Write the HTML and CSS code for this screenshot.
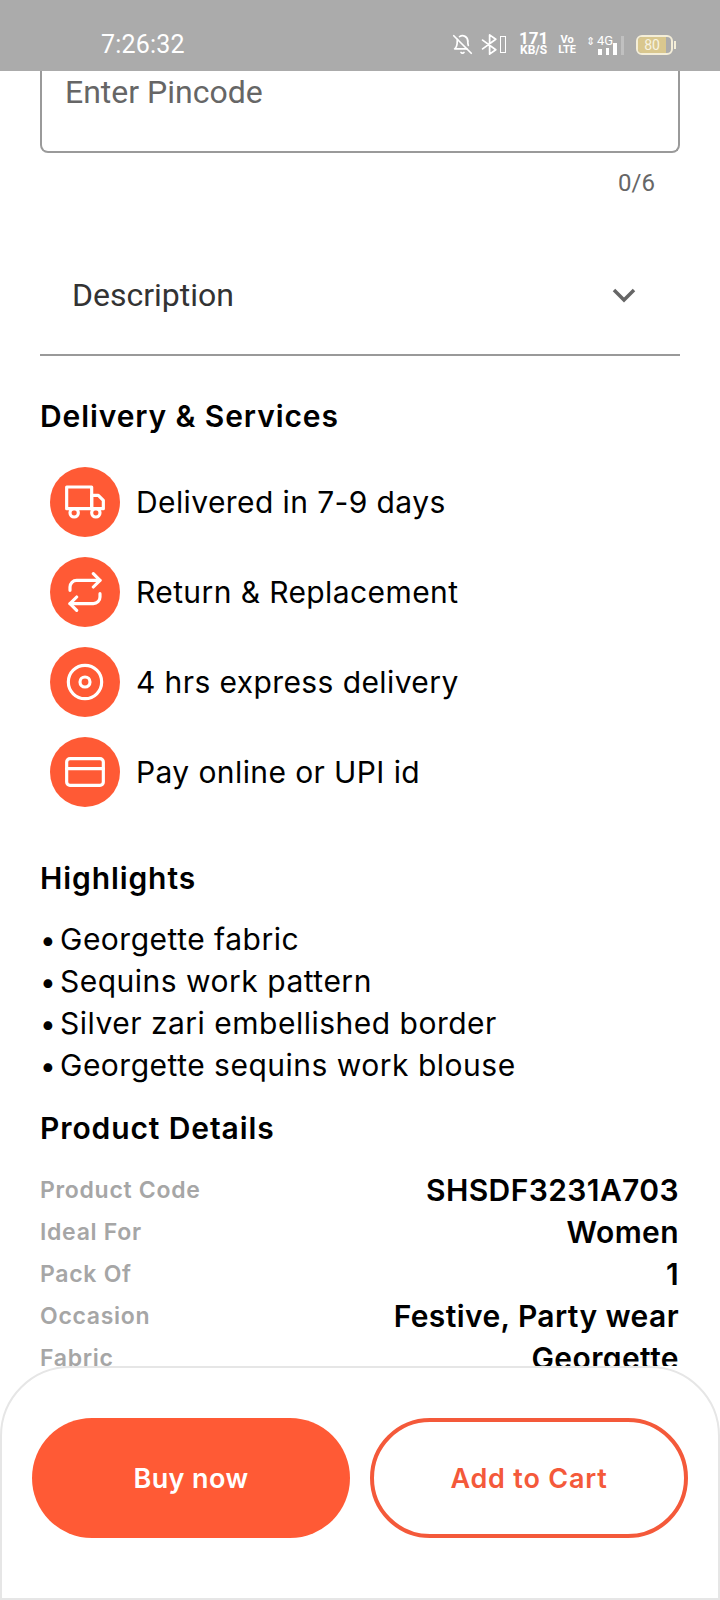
FILE: index.html
```html
<!DOCTYPE html>
<html lang="en">

<head>
    <meta charset="UTF-8">
    <meta name="viewport" content="width=device-width, initial-scale=1.0">
    <title>Product</title>
    <link rel="stylesheet" href="styles.css">
</head>

<body>
    <div class="page">
        <!-- status bar -->
        <div class="status">
            <span class="time">7:26:32</span>
            <div class="status-icons">
                <svg class="bell" viewBox="0 0 24 24"><path d="M13.7 21a2 2 0 0 1-3.4 0"/><path d="M18.6 13A17.900 17.900 0 0 1 18 8"/><path d="M6.300 6.300A5.900 5.900 0 0 0 6 8c0 7-3 9-3 9h14"/><path d="M18 8a6 6 0 0 0-9.300-5"/><path d="M2 2l20 20"/></svg>
                <svg class="bt" viewBox="0 0 24 24"><path d="M3 7l15 11-7 5V1l7 5L3 17"/></svg>
                <span class="mini-batt"></span>
                <span class="speed"><b>171</b><b class="unit">KB/S</b></span>
                <span class="volte"><b>Vo</b><b>LTE</b></span>
                <span class="net">
                    <span class="net-type"><i>⇕</i>4G</span>
                    <span class="bars"><i class="b1"></i><i class="b2"></i><i class="b3"></i><i class="b4"></i></span>
                </span>
                <span class="battery"><span class="battery-level">80</span></span>
                <span class="battery-nub"></span>
            </div>
        </div>

        <div class="main">
            <div class="pincode">Enter Pincode</div>
            <div class="counter">0/6</div>

            <div class="accordion">
                <span>Description</span>
                <svg class="chevron" viewBox="0 0 24 16"><path d="M2 2l10 10L22 2"/></svg>
            </div>

            <h2 class="title services-title">Delivery &amp; Services</h2>
            <ul class="services">
                <li>
                    <span class="circle"><svg viewBox="0 0 24 24"><rect x="1" y="3" width="15" height="13"/><path d="M16 8h4l3 3v5h-7z"/><circle cx="5.500" cy="18.500" r="2.500"/><circle cx="18.500" cy="18.500" r="2.500"/></svg></span>
                    Delivered in 7-9 days
                </li>
                <li>
                    <span class="circle"><svg viewBox="0 0 24 24"><path d="M17 1l4 4-4 4"/><path d="M3 11V9a4 4 0 0 1 4-4h14"/><path d="M7 23l-4-4 4-4"/><path d="M21 13v2a4 4 0 0 1-4 4H3"/></svg></span>
                    Return &amp; Replacement
                </li>
                <li>
                    <span class="circle"><svg viewBox="0 0 24 24"><circle cx="12" cy="12" r="10"/><circle cx="12" cy="12" r="3"/></svg></span>
                    4 hrs express delivery
                </li>
                <li>
                    <span class="circle"><svg viewBox="0 0 24 24"><rect x="1" y="4" width="22" height="16" rx="2"/><path d="M1 10h22"/></svg></span>
                    Pay online or UPI id
                </li>
            </ul>

            <h2 class="title highlights-title">Highlights</h2>
            <ul class="highlights">
                <li><span class="dot">•</span>Georgette fabric</li>
                <li><span class="dot">•</span>Sequins work pattern</li>
                <li><span class="dot">•</span>Silver zari embellished border</li>
                <li><span class="dot">•</span>Georgette sequins work blouse</li>
            </ul>

            <h2 class="title details-title">Product Details</h2>
            <div class="details">
                <div class="row"><span>Product Code</span><b>SHSDF3231A703</b></div>
                <div class="row"><span>Ideal For</span><b>Women</b></div>
                <div class="row"><span>Pack Of</span><b>1</b></div>
                <div class="row"><span>Occasion</span><b>Festive, Party wear</b></div>
                <div class="row"><span>Fabric</span><b>Georgette</b></div>
            </div>
        </div>

        <div class="footer">
            <button class="btn buy">Buy now</button>
            <button class="btn cart">Add to Cart</button>
        </div>
    </div>
</body>

</html>
```

FILE: styles.css
```css
* {
    margin: 0;
    padding: 0;
    box-sizing: border-box;
    list-style: none;
}

body {
    background: #fff;
    font-family: "Inter", "Liberation Sans", sans-serif;
    color: #000;
}

.page {
    width: 720px;
    height: 1600px;
    display: flex;
    flex-direction: column;
    overflow: hidden;
}

/* status bar */
.status {
    height: 71px;
    flex: none;
    background: #ababab;
    display: flex;
    align-items: flex-end;
    padding: 0 0 12px 101px;
    color: #fff;
}

.time {
    font-family: "Roboto", sans-serif;
    font-size: 25px;
    line-height: 28px;
    letter-spacing: 0.2px;
}

.status-icons {
    display: flex;
    align-items: flex-end;
    margin-left: auto;
    margin-bottom: 4px;
    padding-right: 44px;
    font-family: "Roboto", sans-serif;
}

.status-icons svg {
    fill: none;
    stroke: #fff;
    stroke-width: 2;
    stroke-linecap: round;
    stroke-linejoin: round;
}

.bell {
    width: 21px;
    height: 21px;
}

.bt {
    width: 21px;
    height: 21px;
    margin-left: 7px;
}

.mini-batt {
    width: 6px;
    height: 17px;
    border: 1px solid #fff;
    margin-left: -1px;
    margin-bottom: 2px;
}

.speed {
    display: flex;
    flex-direction: column;
    align-items: center;
    margin-left: 13px;
    font-size: 17px;
    line-height: 13px;
}

.speed .unit {
    font-size: 12px;
    line-height: 10px;
}

.volte {
    display: flex;
    flex-direction: column;
    align-items: center;
    margin-left: 10px;
    font-size: 11px;
    line-height: 10px;
}

.net {
    display: flex;
    flex-direction: column;
    margin-left: 10px;
    width: 38px;
}

.net-type {
    font-size: 13px;
    line-height: 12px;
}

.net-type i {
    font-style: normal;
    font-size: 11px;
    margin-right: 2px;
}

.bars {
    display: flex;
    align-items: flex-end;
    gap: 4px;
    height: 19px;
    padding-left: 12px;
    margin-top: -12px;
}

.bars i {
    width: 3.500px;
    background: #fff;
}

.b1 { height: 6px; }
.b2 { height: 7px; }
.b3 { height: 12px; }
.b4 { height: 19px; opacity: 0.25; }

.battery {
    width: 37px;
    height: 20px;
    border: 2px solid #f4eed8;
    border-radius: 6px;
    margin-left: 12px;
    overflow: hidden;
}

.battery-level {
    display: block;
    width: 28px;
    height: 100%;
    background: #d9c78e;
    font-size: 14px;
    line-height: 16px;
    text-align: center;
    color: #f7f3e2;
}

.battery-nub {
    width: 2px;
    height: 8px;
    background: #f4eed8;
    margin: 0 0 6px 1px;
}

/* scrolling content */
.main {
    flex: 1;
    min-height: 0;
    overflow: hidden;
    padding: 0 40px;
}

.pincode {
    height: 82px;
    border: 2px solid #9a9a9a;
    border-top: 0;
    border-radius: 0 0 8px 8px;
    padding: 3px 23px 0;
    font-family: "Roboto", sans-serif;
    font-size: 32px;
    line-height: 36px;
    color: #666;
}

.counter {
    font-family: "Roboto", sans-serif;
    font-size: 24px;
    line-height: 28px;
    color: #666;
    text-align: right;
    padding-right: 25px;
    margin-top: 16px;
}

.accordion {
    height: 122px;
    margin-top: 37px;
    border-bottom: 2px solid #999;
    display: flex;
    align-items: center;
    justify-content: space-between;
    padding: 2px 44px 0 32px;
    font-family: "Roboto", sans-serif;
    font-size: 32px;
    color: #333;
}

.chevron {
    width: 24px;
    height: 16px;
    margin-top: 2px;
    fill: none;
    stroke: #666;
    stroke-width: 3.500;
}

.title {
    font-size: 30px;
    line-height: 36px;
    font-weight: 600;
    letter-spacing: 0.9px;
}

.services-title {
    margin-top: 42px;
}

.services {
    margin-top: 33px;
}

.services li {
    display: flex;
    align-items: center;
    gap: 16px;
    height: 70px;
    margin-bottom: 20px;
    padding-left: 10px;
    font-size: 30px;
    letter-spacing: 0.4px;
}

.circle {
    width: 70px;
    height: 70px;
    border-radius: 50%;
    background: #ff5a35;
    display: flex;
    align-items: center;
    justify-content: center;
}

.circle svg {
    width: 40px;
    height: 40px;
    fill: none;
    stroke: #fff;
    stroke-width: 1.900;
    stroke-linecap: round;
    stroke-linejoin: round;
}

.highlights-title {
    margin-top: 53px;
}

.highlights {
    margin-top: 22px;
    font-size: 30px;
    letter-spacing: 0.5px;
}

.highlights li {
    height: 42px;
    line-height: 42px;
}

.dot {
    display: inline-block;
    width: 20px;
    font-size: 28px;
}

.details-title {
    margin-top: 24px;
}

.details {
    margin-top: 23px;
}

.row {
    display: flex;
    align-items: center;
    justify-content: space-between;
    height: 42px;
    padding-right: 1px;
    font-size: 30px;
}

.row span {
    font-size: 23px;
    font-weight: 600;
    letter-spacing: 0.7px;
    color: #a6a6a6;
}

.row b {
    font-weight: 600;
    letter-spacing: 0.4px;
}

/* buttons */
.footer {
    height: 234px;
    flex: none;
    background: #fff;
    border: 2px solid #e6e6e6;
    border-radius: 70px 70px 0 0;
    display: flex;
    justify-content: space-between;
    padding: 50px 30px 0;
}

.btn {
    width: 318px;
    height: 120px;
    border-radius: 60px;
    font-family: "Inter", "Liberation Sans", sans-serif;
    font-size: 27px;
    font-weight: 600;
    letter-spacing: 0.4px;
}

.buy {
    background: #ff5a35;
    border: 0;
    color: #fff;
}

.cart {
    background: #fff;
    border: 4px solid #f4593a;
    color: #f4593a;
    letter-spacing: 0.8px;
}
```
